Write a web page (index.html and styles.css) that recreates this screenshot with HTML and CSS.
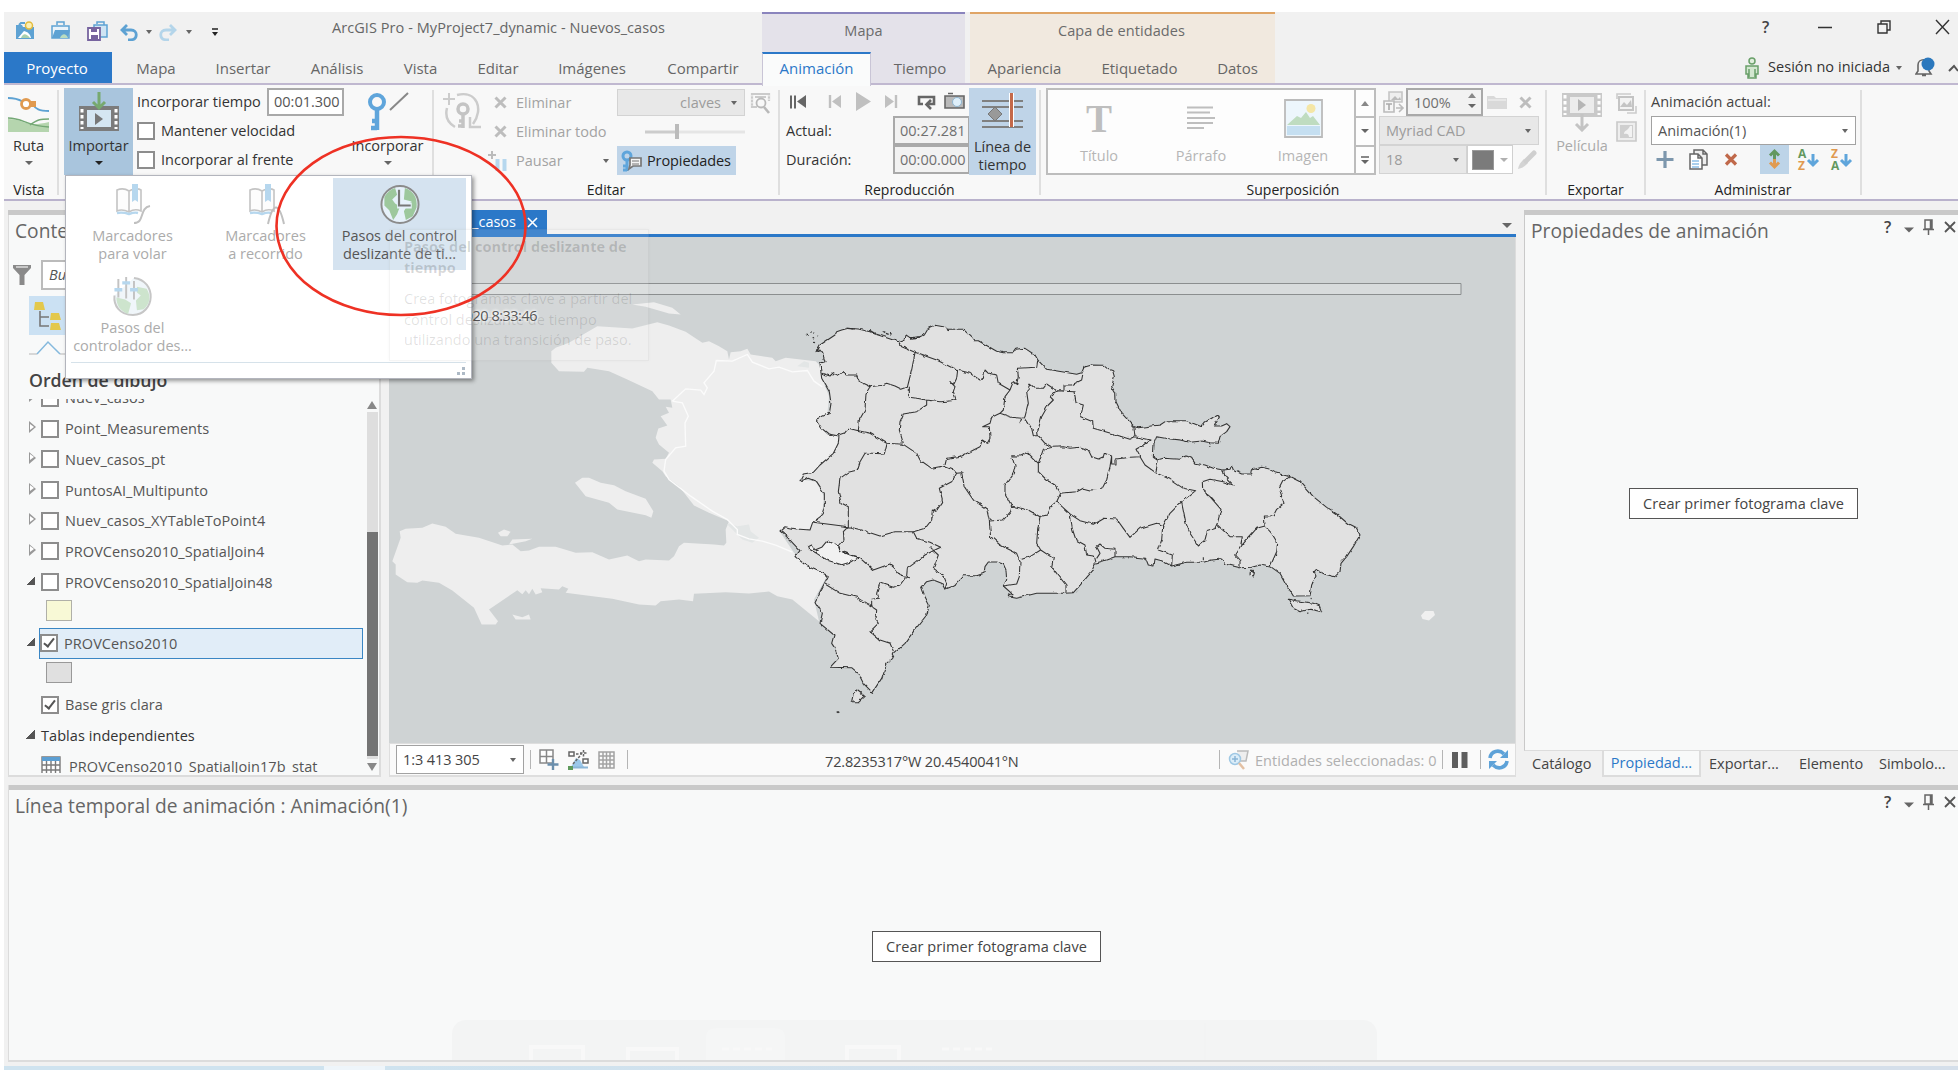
FILE: index.html
```html
<!DOCTYPE html>
<html lang="es">
<head>
<meta charset="utf-8">
<title>ArcGIS Pro - MyProject7_dynamic - Nuevos_casos</title>
<link rel="stylesheet" href="styles.css">
</head>
<body>
<div class="app">
  <header class="titlebar">
    <div class="quick">
      <svg width="20" height="20" viewBox="0 0 20 20"><path d="M1 4h6l1 2h11v12H1z" fill="#5ea2d3"/><path d="M4 4l2-2h4" stroke="#5ea2d3" fill="none" stroke-width="2"/><path d="M3 17l6-7c4 1 6 3 7 7z" fill="#fff"/><path d="M6 17c2-5 5-5 9 0z" fill="#a9d0ae"/><circle cx="14" cy="4.500" r="3.500" fill="#fbf0b4" stroke="#e3bb3d" stroke-width="1.500"/></svg>
      <svg width="20" height="20" viewBox="0 0 20 20"><path d="M1 5h17v12H1z" fill="#eaf3fa" stroke="#5ea2d3" stroke-width="1.500"/><path d="M6 4V1h7v3" fill="none" stroke="#5ea2d3" stroke-width="1.500"/><path d="M1 17l3-8h15l-2 8z" fill="#5ea2d3"/><path d="M9 17c2-5 6-5 8 0z" fill="#b9dcc0"/></svg>
      <svg width="21" height="20" viewBox="0 0 21 20"><path d="M7 4h13v12H7z" fill="#cfe4f3" stroke="#5ea2d3" stroke-width="1.500"/><path d="M10 3V1h7v3" fill="none" stroke="#5ea2d3" stroke-width="1.500"/><path d="M1 7h12v12H1z" fill="#fff" stroke="#77649f" stroke-width="1.800"/><path d="M4 7h6v4H4zM4 14h7v5H4z" fill="#77649f"/></svg>
      <svg class="undo" width="18" height="17" viewBox="0 0 18 17"><path d="M7 1L2 6l5 5M2 6h9c7 0 7 9 0 10H8" fill="none" stroke="#5ea2d3" stroke-width="2.800"/></svg>
      <i class="tri small"></i>
      <svg class="redo" width="18" height="17" viewBox="0 0 18 17"><path d="M11 1l5 5-5 5M16 6H7C0 6 0 15 7 16h3" fill="none" stroke="#b4d5ea" stroke-width="2.800"/></svg>
      <i class="tri small"></i>
      <span class="more"><i class="tri small"></i></span>
    </div>
    <div class="wintitle">ArcGIS Pro - MyProject7_dynamic - Nuevos_casos</div>
    <div class="ctx ctx-map">Mapa</div>
    <div class="ctx ctx-layer">Capa de entidades</div>
    <svg class="winbtns" width="200" height="30" viewBox="1758 12 200 30"><text x="1762" y="33" class="q">?</text><path d="M1818 27.500h14M1936 20l13 14M1949 20l-13 14" stroke="#333" stroke-width="1.400"/><path d="M1878 24h9v9h-9zM1881 24v-3h9v9h-3" fill="none" stroke="#333" stroke-width="1.400"/></svg>
  </header>
  <nav class="tabs">
    <span class="tab project">Proyecto</span>
    <span class="tab w88">Mapa</span>
    <span class="tab w86">Insertar</span>
    <span class="tab w102">Análisis</span>
    <span class="tab w65">Vista</span>
    <span class="tab w90">Editar</span>
    <span class="tab w98">Imágenes</span>
    <span class="tab w121 wide">Compartir</span>
    <span class="tab active">Animación</span>
    <span class="tab inmap">Tiempo</span>
    <span class="tab inlayer w109">Apariencia</span>
    <span class="tab inlayer w121">Etiquetado</span>
    <span class="tab inlayer w75">Datos</span>
    <span class="session">
      <svg width="14" height="22" viewBox="0 0 14 22"><circle cx="7" cy="4" r="3" fill="#e0eedd" stroke="#6aa06a" stroke-width="1.500"/><path d="M1 9h12v8h-2v4H3v-4H1zM4 12v8M10 12v8" fill="#d3e7d0" stroke="#6aa06a" stroke-width="1.500"/></svg>
      <b>Sesión no iniciada</b><i class="tri small"></i>
      <svg class="bell" width="20" height="21" viewBox="0 0 20 21"><path d="M1 17h15l-2-3V8c0-7-11-7-11 0v6zM7 18.500h4" fill="#f3f3f3" stroke="#666" stroke-width="1.600"/><circle cx="13" cy="7" r="6.500" fill="#2b78bd"/></svg>
      <svg class="collapse" width="10" height="8" viewBox="0 0 10 8"><path d="M1 7l5-5 4 5" fill="none" stroke="#555" stroke-width="2"/></svg>
    </span>
  </nav>

  <section class="ribbon">
    <div class="group g1">
      <div class="body big">
        <svg width="41" height="40" viewBox="0 0 41 40"><path d="M0 6c12 0 14 4 18 5M24 12c4 5 7 7 17 7" fill="none" stroke="#5ea2d3" stroke-width="1.800"/><path d="M0 27c16 0 17 9 41 3v10H0z" fill="#b5d5ae"/><path d="M0 26c16 0 17 8 41 9M22 33c8-6 11-6 19-6" fill="none" stroke="#74a875" stroke-width="1.500"/><circle cx="18" cy="12" r="4.500" fill="#fff" stroke="#e09a50" stroke-width="2.800"/><path d="M22 9h6v6h-6z" fill="#e09a50"/></svg>
        <span>Ruta</span><i class="tri"></i>
      </div>
      <div class="glabel">Vista</div>
    </div>
    <div class="sep"></div>
    <div class="group g2">
      <div class="body row">
        <div class="big import">
          <svg width="40" height="40" viewBox="0 0 40 40"><path d="M0 14h40v25H0z" fill="#7c7c7c"/><path d="M8 18h24v17H8z" fill="#d5e6f2"/><path d="M3 17v20M37 17v20" stroke="#fff" stroke-width="3" stroke-dasharray="3.500 2.500"/><path d="M16 21l8 6-8 6z" fill="#777"/><path d="M20 0v16M14 10l6 6 6-6" fill="none" stroke="#77a96f" stroke-width="3"/></svg>
          <span>Importar</span><i class="tri dark"></i>
        </div>
        <div class="opts">
          <div class="line"><span class="lbl w130">Incorporar tiempo</span><span class="input w77">00:01.300</span></div>
          <div class="line"><i class="check"></i><span>Mantener velocidad</span></div>
          <div class="line"><i class="check"></i><span>Incorporar al frente</span></div>
        </div>
        <div class="big addkey">
          <svg width="42" height="40" viewBox="0 0 42 40"><circle cx="10" cy="10" r="7" fill="none" stroke="#5fa5db" stroke-width="4"/><path d="M10 17v21M10 36H4M10 29H5" stroke="#5fa5db" stroke-width="4.500"/><path d="M23 18L41 1" stroke="#888" stroke-width="2"/></svg>
          <span>Incorporar</span><i class="tri"></i>
        </div>
      </div>
    </div>
    <div class="sep"></div>
    <div class="group g3">
      <div class="body row">
        <svg class="updkey" width="40" height="40" viewBox="0 0 40 40"><path d="M6 1v12M0 7h12" stroke="#ccc" stroke-width="2"/><path d="M14 3c20-5 27 14 16 29M4 16c-2 8 1 15 8 19M27 25v10h11" fill="none" stroke="#ccc" stroke-width="2.500"/><circle cx="20" cy="17" r="5" fill="none" stroke="#c4c4c4" stroke-width="3.500"/><path d="M20 22v14M20 34h-5M20 29h-4" stroke="#c4c4c4" stroke-width="3.500"/></svg>
        <div class="cmds">
          <div class="line"><svg width="13" height="13" viewBox="0 0 13 13"><path d="M1.500 1.500l10 10M11.500 1.500l-10 10" stroke="#bdbdbd" stroke-width="3"/></svg><span>Eliminar</span></div>
          <div class="line"><svg width="13" height="13" viewBox="0 0 13 13"><path d="M1.500 1.500l10 10M11.500 1.500l-10 10" stroke="#bdbdbd" stroke-width="3"/></svg><span>Eliminar todo</span></div>
          <div class="line pause"><svg width="19" height="20" viewBox="0 0 19 20"><path d="M4 0v8M0 4h8" stroke="#bbb" stroke-width="2"/><path d="M9.500 8v12M16.500 8v12" stroke="#b6d7ee" stroke-width="4"/></svg><span>Pausar</span><i class="tri small"></i></div>
        </div>
        <div class="keyopts">
          <div class="line"><span class="combo off w128">claves<i class="tri small"></i></span><svg width="21" height="22" viewBox="0 0 21 22"><path d="M1 2h19M2 1v14h5M19 1v8M5 5h11" fill="none" stroke="#cbcbcb" stroke-width="2.200"/><path d="M2 3v11M19 3v6" stroke="#fff" stroke-dasharray="1.500 2"/><circle cx="11" cy="11" r="4.500" fill="#f8f8f8" stroke="#b9b9b9" stroke-width="1.800"/><path d="M14 15l5 6" stroke="#b9b9b9" stroke-width="2.600"/></svg></div>
          <div class="line"><svg class="slide" width="100" height="16"><path d="M0 8h30" stroke="#ccc" stroke-width="3"/><path d="M34 8h66" stroke="#e5e5e5" stroke-width="3"/><path d="M32 0v15" stroke="#bbb" stroke-width="4"/></svg></div>
          <div class="line"><span class="pressed w119"><svg width="21" height="22" viewBox="0 0 21 22"><circle cx="6" cy="6" r="4" fill="none" stroke="#5fa5db" stroke-width="3"/><path d="M6 10v11M6 20H2M6 16H2" stroke="#5fa5db" stroke-width="3"/><path d="M9 8h11v8h-8l-4 3 1-4z" fill="#f3f3f3" stroke="#777" stroke-width="1.700"/><path d="M11 11h7M11 14h7" stroke="#777"/></svg>Propiedades</span></div>
        </div>
      </div>
      <div class="glabel">Editar</div>
    </div>
    <div class="sep"></div>
    <div class="group g4">
      <div class="body row">
        <div class="play">
          <svg width="184" height="28" viewBox="787 88 184 28"><path d="M792 95.500v13M796 95.500v13" stroke="#666" stroke-width="2"/><path d="M807 95v13l-9-6.500z" fill="#666"/><path d="M831 95v13" stroke="#c0c0c0" stroke-width="2.400"/><path d="M842 95v13l-9-6.500zM886 95v13l9-6.500zM857 92v19l15-9.500z" fill="#c0c0c0"/><path d="M897 95v13" stroke="#c0c0c0" stroke-width="2.400"/><path d="M924 104h-4v-7h15v7h-8M932 100l-4.500 4.500 4.500 4.500" fill="none" stroke="#666" stroke-width="2.600"/><path d="M946 96h19v12h-19zM949 93.500h5" fill="#b9b9b9" stroke="#666" stroke-width="1.600"/><circle cx="958" cy="102" r="4.500" fill="#deeffa" stroke="#8fb6d0"/></svg>
          <div class="line"><span class="lbl w107">Actual:</span><span class="input off w77">00:27.281</span></div>
          <div class="line"><span class="lbl w107">Duración:</span><span class="input off w77">00:00.000</span></div>
        </div>
        <div class="big timeline">
          <svg width="42" height="35" viewBox="0 0 42 35"><path d="M0 8h41M0 14h41M0 28h41M0 34h41" stroke="#808080" stroke-width="1.800"/><path d="M13 14l7 7-7 7-7-7z" fill="#999" stroke="#777"/><path d="M29.500 0v34" stroke="#fff" stroke-width="5"/><path d="M29.500 0v34" stroke="#c4694a" stroke-width="3"/></svg>
          <span>Línea de<br>tiempo</span>
        </div>
      </div>
      <div class="glabel">Reproducción</div>
    </div>
    <div class="sep"></div>
    <div class="group g5">
      <div class="body row">
        <div class="gallery">
          <div class="gitem"><em class="bigt">T</em><span>Título</span></div>
          <div class="gitem"><svg width="28" height="39" viewBox="0 0 28 39"><path d="M0 8.500h26M0 13.500h23M0 19h28M0 24h26M0 29h17" stroke="#bebebe" stroke-width="1.800"/></svg><span>Párrafo</span></div>
          <div class="gitem"><svg width="39" height="39" viewBox="0 0 39 39"><path d="M1 1h37v37H1z" fill="#edf6fc" stroke="#bbb" stroke-width="1.800"/><path d="M3 27h33v9H3z" fill="#c5dff1"/><path d="M3 26l10-9 4 2 5-6 4 6 3-2 7 9z" fill="#bfdcc0"/><circle cx="27" cy="9.500" r="4.500" fill="#f4e6a6"/></svg><span>Imagen</span></div>
          <div class="gscroll"><span><i class="tri up"></i></span><span><i class="tri"></i></span><span class="exp"><i class="tri"></i></span></div>
        </div>
        <div class="textopts">
          <div class="line">
            <svg class="swap" width="27" height="22" viewBox="0 0 27 22"><path d="M10 1h13v10H10z" fill="#eee" stroke="#c5c5c5" stroke-width="1.600"/><path d="M12 9l4-4 3 3 2-2 1 3z" fill="#bbb"/><path d="M5 10h10v11H5zM17 17h6M20 13l4 4-4 4" fill="#f6f6f6" stroke="#bbb" stroke-width="1.600"/><path d="M7 13h6M10 13v6" stroke="#aaa" stroke-width="1.600"/></svg>
            <span class="input off spin w77">100%<span><i class="tri up"></i><i class="tri"></i></span></span>
            <svg width="20" height="15" viewBox="0 0 20 15"><path d="M0 14V1h7l2 2h11v11z" fill="#d9d9d9"/><path d="M1 5h18" stroke="#f5f5f5"/></svg>
            <svg class="ex" width="13" height="13" viewBox="0 0 13 13"><path d="M1.500 1.500l10 10M11.500 1.500l-10 10" stroke="#bdbdbd" stroke-width="3"/></svg>
          </div>
          <div class="line"><span class="combo off left w160">Myriad CAD<i class="tri small"></i></span></div>
          <div class="line"><span class="combo off left w88">18<i class="tri small"></i></span><span class="color"><b></b><i class="tri"></i></span><svg class="brush" width="20" height="20" viewBox="0 0 20 20"><path d="M1 19c1-5 3-7 6-10l4 4c-3 3-5 5-10 6z" fill="#d4d4d4"/><path d="M9 11l8-8" stroke="#cfcfcf" stroke-width="5" stroke-linecap="round"/></svg></div>
        </div>
      </div>
      <div class="glabel">Superposición</div>
    </div>
    <div class="sep"></div>
    <div class="group g6">
      <div class="body row">
        <div class="big movie">
          <svg width="40" height="40" viewBox="0 0 40 40"><path d="M0 1h40v24H0z" fill="#c9c9c9"/><path d="M8 5h24v16H8z" fill="#ececec"/><path d="M3 3v20M37 3v20" stroke="#fff" stroke-width="3" stroke-dasharray="3.500 2.500"/><path d="M16 7l8 6-8 6z" fill="#b5b5b5"/><path d="M20 22v16M14 32l6 6 6-6" fill="none" stroke="#c4c4c4" stroke-width="3"/></svg>
          <span>Película</span>
        </div>
        <div class="minis">
          <svg width="21" height="21" viewBox="0 0 21 21"><path d="M1 6V1h14M20 13v7H11" fill="none" stroke="#ccc" stroke-width="1.600"/><path d="M3 4h14v13H3z" fill="#f3f3f3" stroke="#c4c4c4" stroke-width="2"/><path d="M4 14l4-5 3 3 4-5 1 7z" fill="#c4c4c4"/></svg>
          <svg width="21" height="21" viewBox="0 0 21 21"><path d="M1 1h19v19H1z" fill="#eee" stroke="#c9c9c9" stroke-width="1.600"/><path d="M4 4h13v13H4z" fill="#cfcfcf"/><path d="M14 5c-2 5-6 4-6 8 3-1 5 0 5 3h3V5z" fill="#f3f3f3"/></svg>
        </div>
      </div>
      <div class="glabel">Exportar</div>
    </div>
    <div class="sep"></div>
    <div class="group g7">
      <div class="body">
        <div class="line">Animación actual:</div>
        <div class="line"><span class="combo left w205">Animación(1)<i class="tri small"></i></span></div>
        <div class="line"><svg width="205" height="29" viewBox="1651 146 205 29"><path d="M1665 152v17M1656.500 160.500h17" stroke="#7d97ad" stroke-width="3.200"/><path d="M1694 151h9l4 4v11h-13zM1703 151v4h4" fill="#eee" stroke="#666" stroke-width="1.500"/><path d="M1690 155h8l4 4v11h-12zM1698 155v4h4" fill="#fff" stroke="#666" stroke-width="1.500"/><path d="M1692 162h7M1692 165h7M1692 168h7" stroke="#8fc0e6" stroke-width="1.600"/><path d="M1726 155.500l10 10M1736 155.500l-10 10" stroke="#c0694b" stroke-width="3.200"/><path d="M1760 146h29v29h-29z" fill="#bdd4e8"/><path d="M1774.500 152v8M1770 156.500l4.500-4.500 4.500 4.500" fill="none" stroke="#63985f" stroke-width="3"/><path d="M1774.500 160v8M1770 163.500l4.500 4.500 4.500-4.500" fill="none" stroke="#e09a50" stroke-width="3"/><path d="M1813 155v10M1808 161l5 5 5-5M1846 155v10M1841 161l5 5 5-5" fill="none" stroke="#5fa5db" stroke-width="3"/><text x="1798" y="159" class="az gr">A</text><text x="1798" y="171" class="az or">Z</text><text x="1831" y="159" class="az or">Z</text><text x="1831" y="171" class="az gr">A</text></svg></div>
      </div>
      <div class="glabel">Administrar</div>
    </div>
    <div class="sep"></div>
  </section>

  <main class="work">
    <aside class="panel contents">
      <h2>Contenido</h2>
      <div class="search"><svg width="18" height="22" viewBox="0 0 18 22"><path d="M0 1h18v3l-6.500 7v10h-5V11L0 4z" fill="#8a8a8a"/><path d="M3 3h12" stroke="#ddd" stroke-width="1.500"/></svg><span>Buscar</span></div>
      <div class="views">
        <svg width="40" height="39" viewBox="0 0 40 39"><path d="M0 0h40v39H0z" fill="#cbe1f3"/><path d="M6 6h8l2 8H5zM22 17h8l2 7H21zM22 27h8l2 7H21z" fill="#e3c84c"/><path d="M11 15v15h9M11 21h9" fill="none" stroke="#777" stroke-width="1.600"/></svg>
        <svg width="66" height="22" viewBox="0 0 66 22"><path d="M0 19h8M31 19h35" stroke="#ccc" stroke-width="1.500"/><path d="M8 19L19 7l12 12" fill="none" stroke="#85b9dd" stroke-width="1.500"/></svg>
      </div>
      <h3>Orden de dibujo</h3>
      <div class="tree">
        <ul>
          <li><i class="exp"></i><i class="check"></i>Nuev_casos</li>
          <li><i class="exp"></i><i class="check"></i>Point_Measurements</li>
          <li><i class="exp"></i><i class="check"></i>Nuev_casos_pt</li>
          <li><i class="exp"></i><i class="check"></i>PuntosAI_Multipunto</li>
          <li><i class="exp"></i><i class="check"></i>Nuev_casos_XYTableToPoint4</li>
          <li><i class="exp"></i><i class="check"></i>PROVCenso2010_SpatialJoin4</li>
          <li><i class="exp open"></i><i class="check"></i>PROVCenso2010_SpatialJoin48</li>
          <li class="sw"><b class="yellow"></b></li>
          <li><i class="exp open"></i><span class="selected"><i class="check on"></i>PROVCenso2010</span></li>
          <li class="sw"><b class="grey"></b></li>
          <li><i class="exp none"></i><i class="check on"></i>Base gris clara</li>
          <li class="head"><i class="exp open"></i>Tablas independientes</li>
          <li class="tbl"><i class="exp none"></i><svg width="20" height="20" viewBox="0 0 20 20"><path d="M1 1h18v18H1zM1 9h18M1 14h18M5.500 5v14M10 5v14M14.500 5v14" fill="#fff" stroke="#7a7a7a" stroke-width="1.400"/><path d="M1 1h18v4H1z" fill="#5c9fd3"/></svg>PROVCenso2010_SpatialJoin17b_stat</li>
        </ul>
        <div class="scroll"><i class="tri up"></i><div class="track"><div class="thumb"></div></div><i class="tri"></i></div>
      </div>
    </aside>

    <section class="mapview">
      <div class="maptabs"><span class="maptab">Nuevos_casos<svg width="11" height="11" viewBox="0 0 11 11"><path d="M1 1l9 9M10 1l-9 9" stroke="#fff" stroke-width="1.600"/></svg></span><i class="tri"></i></div>
      <div class="map">
        <svg width="1126" height="506" viewBox="389 237 1126 506">
          <defs><filter id="coast" x="-2%" y="-2%" width="104%" height="104%" color-interpolation-filters="sRGB"><feTurbulence type="fractalNoise" baseFrequency="0.16" numOctaves="2" seed="4" result="noise"/><feDisplacementMap in="SourceGraphic" in2="noise" scale="3.500" xChannelSelector="R" yChannelSelector="G"/></filter></defs>
          <g transform="translate(379 299.500) scale(.33333)" fill="#eeeeee">
            <path d="M517 155L530 145 570 130 655 80 760 87 835 68 870 78 920 97 970 130 990 125 1020 140 1045 155 1050 180 1055 158 1085 155 1105 148 1115 165 1180 175 1190 185 1220 175 1310 185 1325 200 1330 240 1350 290 1345 345 1310 360 1345 405 1380 410 1370 460 1300 520 1260 540 1310 545 1335 590 1330 640 1295 690 1200 692 1245 760 1345 828 1305 900 1320 965 1240 900 1195 890 1170 876 1110 882 1040 878 945 883 942 905 900 900 845 905 830 918 780 915 700 898 600 885 560 880 568 868 550 860 540 870 485 866 490 878 470 885 460 868 450 884 440 872 430 884 415 872 330 930 357 965 350 975 308 975 285 925 220 873 180 850 130 843 115 850 85 848 50 825 50 795 40 785 65 715 62 695 80 688 130 685 160 672 200 682 230 703 300 715 370 738 400 735 425 755 450 753 480 742 530 742 590 760 640 758 690 780 745 768 780 785 800 780 870 783 885 770 900 740 915 730 1005 735 1035 738 1042 730 1040 690 1050 665 990 640 945 618 900 560 860 530 850 515 820 490 825 480 860 478 870 460 840 435 830 415 838 387 865 378 845 350 870 340 860 322 880 325 875 300 840 300 820 275 745 240 690 215 625 205 615 217 540 215 517 190Z"/>
            <path d="M588 550L610 535 630 535 665 550 705 557 740 575 800 598 823 635 817 655 800 647 715 630 690 610 620 590ZM357 700L375 690 395 697 385 710 365 710ZM390 735L400 720 460 718 440 725ZM400 945L430 953 450 945 455 960 410 960ZM760 15L825 8 880 25 905 45 870 42 800 22Z"/>
            <path d="M1050 672l25 8 35-5 5 20 25 20-20 15-30-10-45-45zM1255 200l20-15 15 5v15z" fill="#e3e6e6"/>
            <path d="M880 305L920 268 965 272 975 285 985 265 975 250 1005 215 1012 183 1060 185 1105 165 1120 188 1170 208 1200 203 1240 217 1285 213 1305 245 1330 262M880 305L910 310 928 350 918 370 920 440 890 445 860 480 855 515 870 540 935 590 1000 635 1045 660 1075 690 1075 705 1110 718 1150 725 1190 737 1240 758" fill="none" stroke="#fbfbfb" stroke-width="4"/>
          </g>
          <g class="prov" filter="url(#coast)"><g transform="translate(770 310) scale(.33333)">
            <path class="land" d="M150 105L195 75 200 65 215 60 235 55 265 57 300 65 315 72 345 82 385 95 405 88 408 75 420 83 450 80 465 72 475 55 495 46 520 50 530 58 580 58 605 82 612 92 625 92 680 124 700 128 730 128 737 118 765 115 795 135 805 152 830 178 880 186 920 193 935 188 942 172 965 165 1000 166 1015 178 1028 182 1033 200 1025 230 1037 250 1038 275 1055 310 1093 350 1105 353 1170 345 1190 332 1250 332 1295 350 1305 337 1340 316 1348 322 1333 348 1355 348 1370 341 1380 350 1370 365 1350 380 1345 400 1320 398 1295 393 1260 397 1230 390 1185 385 1160 380 1152 400 1150 442 1162 450 1180 445 1230 448 1250 438 1265 445 1275 460 1305 465 1330 475 1360 480 1380 478 1385 466 1390 480 1415 492 1445 492 1447 480 1475 472 1495 476 1515 488 1560 500 1590 515 1630 560 1670 592 1700 612 1735 642 1760 655 1770 675 1750 710 1730 740 1713 760 1710 785 1695 800 1665 793 1640 780 1633 788 1638 798 1625 825 1620 857 1570 858 1550 825 1530 790 1505 772 1470 765 1445 772 1410 773 1365 762 1355 747 1325 750 1300 757 1250 757 1205 768 1175 752 1155 747 1152 768 1135 765 1127 745 1080 740 1035 740 1000 753 975 760 965 785 935 820 910 848 885 850 860 850 800 850 740 865 715 860 725 850 700 828 710 810 708 780 700 762 680 756 655 756 645 770 642 790 620 797 580 797 550 828 525 838 515 820 490 810 470 815 455 832 465 860 478 885 470 915 430 965 405 1000 372 1030 365 1045 350 1060 335 1105 307 1147 280 1120 265 1090 245 1073 180 1072 205 1045 195 1015 185 1000 192 975 150 940 157 910 135 875 175 797 110 768 75 740 90 722 50 680 30 663 45 650 80 657 120 660 128 637 155 617 163 590 163 550 140 515 115 505 90 512 100 492 130 487 150 465 190 430 205 400 207 378 175 372 155 355 138 328 178 310 183 280 178 245 155 205 150 160 165 155 158 130 150 120 138 128Z"/>
            <path class="lake" d="M115 710L125 705 135 720 155 712 172 692 205 708 210 722 265 742 240 757 215 764 170 750 140 730 118 718Z"/>
            <path class="edge" d="M155 190L180 198 190 188 205 197 220 185 232 195 260 195 268 215 300 230 335 226 350 220 375 228 395 238 412 232 425 180 435 128M385 95L395 110 435 127 500 150 560 180 600 190 630 210 640 205 645 180 655 190 680 195 685 220 720 240M418 230L418 262 440 265 470 270 470 285 440 305 400 312 390 335 388 360 400 400M470 270L510 275 545 272 558 268 550 245 555 230 540 215 552 222 560 205 563 180M300 230L288 250 285 300 268 330 265 360M205 375L225 368 235 355 265 362 300 370 350 400 400 403 440 430 450 450 485 475 520 468 550 480 560 490M350 403L343 432 310 430 285 430 270 455 262 480 235 487 210 505 205 545 213 578 235 590 235 650M130 637L235 650 275 660 330 678 375 665 430 665 465 655 485 630 487 600 497 605 518 575 508 535 545 515 560 490 575 488 583 530 610 570 650 597 658 633M525 465L530 445 575 438 630 410 637 390 652 400 660 385 658 350 638 350 660 340 665 322 690 310M720 240L705 260 700 300 690 310 725 322 755 325 750 338 765 320 775 280 770 245 780 222 795 235 820 235 830 222 860 242 882 242M720 240L730 215 740 222 745 200 742 175 800 172 803 152M765 325L785 355 790 377 805 377 803 365 815 320 835 285 850 270 840 260 860 242 912 245 918 278 940 285 932 320 968 335 970 355 1030 372 1080 388 1095 380 1092 353M882 240L882 225 905 225 935 210 940 185M805 377L825 400 848 412 820 418 805 460 805 485 830 510 855 525 872 550 860 575 840 590 830 615 810 620 775 600 725 588 705 550 705 525 730 490 735 470 725 437 750 438 772 427 805 460M848 412L880 410 900 415 930 412 955 420 965 440 985 447 1000 440 1003 430 1025 438 1020 470 1010 510 995 538 960 540 940 535 920 545 870 550M1025 440L1025 462 1038 462 1038 447 1080 442 1110 440 1098 418 1120 405 1140 390 1095 380M725 588L722 605 700 630 658 633 662 680 690 705 740 730 750 755 748 800 740 822 700 828M810 620L803 660 800 700 812 720 780 740 755 748M812 720L850 745 845 770 860 790 888 825 888 848M860 575L900 612 930 632 970 643 1000 625 1040 627 1060 655 1080 682 1110 655 1160 640 1178 650M900 612L908 660 918 690 945 705 950 735 970 738 975 758M980 745L990 730 980 710 990 702 1005 715 1035 718 1035 740M235 650L220 665 222 690 207 708 210 722 240 735 265 740 310 780 360 762 380 780 395 800 420 803M430 665L440 685 480 697 512 712 490 722 465 735 440 755 412 775 410 798 390 825 370 832 330 818 320 850 325 865 305 868 305 890M165 822L210 850 260 862 305 890 320 900 318 930 325 940 300 965 330 990 360 1000 372 1028M490 722L505 735 490 775 520 795 530 820 525 838M482 712L495 726"/>
            <path class="edge" transform="translate(930)" d="M180 440L195 465 227 488 270 508 310 535 347 542 305 575 270 610 248 650 245 690 235 720 277 735 275 768M227 488L235 450M430 480L435 500 460 525 430 515 390 508 367 515 368 542 390 560 423 598 412 640 405 655 382 662 375 690 355 708 330 670 318 640 305 575M412 645L450 680 487 680 482 710 467 735 480 750 480 772M482 710L530 655 555 648 575 670 593 700 590 725 570 770M630 500L608 515 598 535 612 580 590 598 580 617 553 618 555 648M370 757L370 742"/>
            <path class="land" d="M1442 780L1453 790 1450 798 1440 795ZM1555 868L1580 872 1630 880 1648 887 1655 905 1620 898 1590 905 1570 895ZM260 1140L283 1158 265 1175 245 1175 250 1150Z"/>
            <path class="edge cays" d="M110 75l6 3M122 64l2 4M130 68l2 2M128 82l4 2M132 97l3 1M142 77l2 1M338 65l6 3M348 70l8 3M360 71l5 1M232 55l22 2M300 62l14 8M420 84l30-3M527 58l8 5M200 1205l5 3M1622 865l3 1M1612 912l3 1M1318 407l3 0M140 125l8-14M714 852l16 6"/>
          </g></g>
          <path d="M1421 615.500L1425 611 1433.500 611 1435 615 1429 620.500 1422.500 619Z" fill="#f0f0f0"/>
          <path d="M380 283.500h1081v11H380" fill="#ffffff30" stroke="#8b8e8f"/>
        </svg>
        <span class="stamp">03/02/2020 8:33:46</span>
      </div>
      <div class="status">
        <span class="combo left scale">1:3 413 305<i class="tri small"></i></span>
        <i class="bar"></i>
        <svg width="20" height="22" viewBox="0 0 20 22"><path d="M1 1h13v13H1zM7.500 1v13M1 7.500h13" fill="#fff" stroke="#888" stroke-width="1.500"/><path d="M14 10v11M8.500 15.500h11" stroke="#6b8fad" stroke-width="2.400"/></svg>
        <svg width="21" height="21" viewBox="0 0 21 21"><path d="M3 18L8 9l4 2 4 7z" fill="#9cc8ea"/><path d="M1 3h5v4H1zM15 10h5v4h-5z" fill="#fff" stroke="#666" stroke-width="1.500"/><path d="M8 5h6M15.500 1v7M12 4h7M5 15l7-8" stroke="#666" stroke-dasharray="2.500 1.500" stroke-width="1.500"/><path d="M0 17h5v4H0z" fill="#5f9a5c"/><path d="M5 18.500h15" stroke="#8ab6d8" stroke-width="2"/></svg>
        <svg width="17" height="18" viewBox="0 0 17 18"><path d="M1 1h15v16H1zM1 5h15M1 9h15M1 13h15M5 1v16M8.500 1v16M12 1v16" fill="none" stroke="#a3a3a3" stroke-width="1.500"/></svg>
        <i class="bar"></i>
        <span class="coords">72.8235317°W 20.4540041°N</span>
        <i class="bar"></i>
        <svg width="21" height="20" viewBox="0 0 21 20"><path d="M9 1h11l-2 10h-7" fill="#eee" stroke="#bbb" stroke-width="1.500"/><circle cx="7" cy="9" r="5.500" fill="#dcedf8" stroke="#9fc8e4" stroke-width="1.500"/><path d="M7 6v6M4 9h6" stroke="#89b5d6" stroke-width="1.500"/><path d="M11 13l5 6" stroke="#e3c0a3" stroke-width="2.500"/></svg>
        <span class="sel">Entidades seleccionadas: 0</span>
        <i class="bar"></i>
        <svg width="18" height="18"><path d="M4 1v16M13.500 1v16" stroke="#5e5e5e" stroke-width="6"/></svg>
        <i class="bar b2"></i>
        <svg class="refresh" width="21" height="21" viewBox="0 0 21 21"><path d="M2 9C3 2 11 0 16 5M19 12c-1 7-9 9-14 4" fill="none" stroke="#5ea2d8" stroke-width="3.600"/><path d="M20 1v8h-8zM1 20v-8h8z" fill="#5ea2d8"/></svg>
      </div>
    </section>

    <aside class="right">
      <div class="panel props">
        <div class="phead"><h2>Propiedades de animación</h2><svg width="76" height="20" viewBox="1882 217 76 20"><use href="#pcmd"/></svg></div>
        <div class="button">Crear primer fotograma clave</div>
      </div>
      <div class="ptabs"><span class="p1">Catálogo</span><span class="p2">Propiedad...</span><span class="p3">Exportar...</span><span class="p4">Elemento</span><span>Simbolo...</span></div>
    </aside>

    <section class="panel timelinepanel">
      <div class="phead"><h2>Línea temporal de animación : Animación(1)</h2><svg width="76" height="20" viewBox="1882 217 76 20"><defs><g id="pcmd"><text x="1884" y="233" class="q">?</text><path d="M1904 227.500h10l-5 5z" fill="#666"/><path d="M1925 220h7v9h-7zM1923 229.500h11M1928.500 230v5M1930.500 220v9" fill="none" stroke="#666" stroke-width="1.500"/><path d="M1945 222l10 10M1955 222l-10 10" stroke="#555" stroke-width="1.800"/></g></defs><use href="#pcmd"/></svg></div>
      <div class="button">Crear primer fotograma clave</div>
      <div class="ghostbar"><svg width="925" height="42" viewBox="0 0 925 42"><path d="M254 42V18q0-10 10-10h59q10 0 10 10v24z" fill="#f5f6f6"/><path d="M79 42V27h52v15M176 42V29h49v13M395 42V27h52v15" fill="none" stroke="#f8f8f8" stroke-width="4"/><path d="M270 29h50M490 29h50" stroke="#f8f8f8" stroke-width="3" stroke-dasharray="7 4"/><path d="M753 3v39" stroke="#f1f2f2"/></svg></div>
    </section>
  </main>
  <footer class="taskbar"></footer>

  <div class="menu">
    <div class="mgrid">
      <div class="mitem"><svg width="40" height="41" viewBox="0 0 40 41"><path d="M4 6c5-2 9-1 12 1 3-2 9-3 12-1v21c-4-2-9-1-12 1-4-2-8-3-12-1zM16 7v20" fill="#fdfdfd" stroke="#c4c4c4" stroke-width="1.600"/><path d="M4 29c6-1 9 0 12 1 3-1 6-2 9-1" fill="none" stroke="#b6d7ee" stroke-width="2.400"/><path d="M19 0h6v18l-3-2-3 2z" fill="#b6d7ee"/><path d="M37 22c-11 2-5 17-16 17" fill="none" stroke="#c0c0c0" stroke-width="2"/></svg><span>Marcadores<br>para volar</span></div>
      <div class="mitem"><svg width="40" height="41" viewBox="0 0 40 41"><path d="M4 6c5-2 9-1 12 1 3-2 9-3 12-1v21c-4-2-9-1-12 1-4-2-8-3-12-1zM16 7v20" fill="#fdfdfd" stroke="#c4c4c4" stroke-width="1.600"/><path d="M4 29c6-1 9 0 12 1 3-1 6-2 9-1" fill="none" stroke="#b6d7ee" stroke-width="2.400"/><path d="M19 0h6v18l-3-2-3 2z" fill="#b6d7ee"/><path d="M22 40c5-22 11-22 16 0" fill="none" stroke="#c0c0c0" stroke-width="2"/></svg><span>Marcadores<br>a recorrido</span></div>
      <div class="mitem hot"><svg width="42" height="42" viewBox="0 0 42 42"><circle cx="21" cy="21" r="19" fill="#e6f1fa" stroke="#8b8b8b" stroke-width="2"/><path d="M5 13C8 8 12 5 16 4l2 7-5 5 3 4 5 3-3 8-4 6-4-10-5-5zM26 4c9 3 13 10 12 20l-4 9-7 4-2-9 4-7 4-3-8-2z" fill="#9dc89d"/><path d="M21 5v17h12" fill="none" stroke="#e6f1fa" stroke-width="6"/><path d="M20 6v16h12" fill="none" stroke="#777" stroke-width="2.200"/></svg><span>Pasos del control<br>deslizante de ti...</span></div>
      <div class="mitem"><svg width="42" height="42" viewBox="0 0 42 42"><path d="M22 2c24 3 22 37-1 38C7 40 1 30 2 20" fill="#f0f6fa" stroke="#c6c6c6" stroke-width="2"/><path d="M4 22l9 2 6 4-3 11C8 36 4 30 4 22zM25 11l10 2c5 8 3 16-3 21l-7 1-1-10 5-5-4-3z" fill="#cde4cd"/><path d="M6 3v19M14 1v22M22 5v19" stroke="#c3c3c3" stroke-width="2"/><path d="M2 14h8M10 7h8M18 14h8" stroke="#b6d7ee" stroke-width="3.500"/></svg><span>Pasos del<br>controlador des...</span></div>
    </div>
    <div class="mfoot"><svg width="10" height="10"><path d="M6 0h3v3H6zM6 5h3v3H6zM1 5h3v3H1z" fill="#aebac6"/></svg></div>
  </div>
  <div class="tooltip"><b>Pasos del control deslizante de<br>tiempo</b><p>Crea fotogramas clave a partir del<br>control deslizante de tiempo<br>utilizando una transición de paso.</p></div>
  <svg class="mark" width="254" height="184" viewBox="0 0 254 184"><ellipse cx="127" cy="92" rx="124.500" ry="89" fill="none" stroke="#ee3124" stroke-width="2.600"/></svg>
</div>
</body>
</html>
```
FILE: styles.css
```css
* { box-sizing: border-box; }
body { margin: 0; background: #fff; font-family: "Open Sans", "Noto Sans", sans-serif; font-size: 14.5px; letter-spacing: 0; color: #333; width: 1958px; height: 1070px; overflow: hidden; }
h2, h3, p, ul { margin: 0; padding: 0; font-weight: 400; list-style: none; }
i, em { font-style: normal; }
svg { display: block; flex: none; }
.app { position: relative; margin-left: 4px; padding-top: 12px; height: 1070px; display: flex; flex-direction: column; }

.tri { display: inline-block; flex: none; border: 4px solid transparent; border-top: 4px solid #666; border-bottom: 0; width: 0; height: 0; }
.tri.small { border-width: 3px; border-top-width: 4px; border-bottom-width: 0; }
.tri.dark { border-top-color: #222; }
.tri.up { border-bottom: 5px solid #888; border-top: 0; }

.titlebar { height: 40px; background: #f1f1f1; display: flex; flex: none; }
.quick { width: 328px; display: flex; align-items: flex-start; padding: 9px 0 0 11px; gap: 16px; }
.quick .undo { margin: 3px -8px 0 -4px; }
.quick .redo { margin: 3px -7px 0 -9px; }
.quick .tri { margin-top: 9px; }
.quick .more { margin-left: 4px; margin-top: 7px; border-top: 2px solid #555; width: 6px; height: 10px; display: flex; }
.quick .more .tri { margin-top: 2px; border-top-color: #222; }
.wintitle { width: 430px; line-height: 32px; color: #666; white-space: nowrap; letter-spacing: .06px; }
.ctx { text-align: center; line-height: 33px; color: #6b6b6b; border-top: 2px solid; letter-spacing: .1px; }
.ctx-map { width: 203px; background: #e4e2ea; border-color: #8a84bd; margin-right: 5px; }
.ctx-layer { width: 305px; background: #f1e9df; border-color: #e0a566; padding-right: 2px; }
.winbtns { margin-left: auto; }
.q { font: 600 16px "Open Sans", sans-serif; fill: #444; }

.tabs { height: 31px; background: #f1f1f1; display: flex; flex: none; line-height: 32px; color: #666; }
.tab { text-align: center; flex: none; font-size: 15px; }
.tab.project { width: 108px; background: #2b78c8; color: #fff; padding-right: 2px; }
.tab.wide { padding-left: 3px; }
.w88 { width: 88px; } .w86 { width: 86px; } .w102 { width: 102px; } .w65 { width: 65px; } .w90 { width: 90px; } .w98 { width: 98px; } .w121 { width: 121px; } .w109 { width: 109px; } .w75 { width: 75px; }
.tab.active { width: 109px; background: #fafbfb; border: 1px solid #c9c5d6; border-top: 2px solid #2b78c8; border-bottom: 0; height: 34px; color: #2b78c8; line-height: 28px; z-index: 1; }
.tab.inmap { width: 94px; background: #e4e2ea; margin-right: 5px; padding-left: 4px; }
.tab.inlayer { background: #f1e9df; }
.session { margin-left: auto; width: 213px; display: flex; align-items: center; height: 31px; color: #333; white-space: nowrap; letter-spacing: .05px; }
.session b { font-weight: 400; margin: -2px 6px 0 9px; width: 122px; }
.session .bell { margin-left: 13px; }
.session .collapse { margin-left: auto; }

.ribbon { flex: none; height: 118px; background: #f8f8f8; border-top: 2px solid #c0b8d0; border-bottom: 2px solid #b9b2cc; display: flex; padding-top: 3px; color: #333; line-height: 20px; }
.sep { width: 2px; margin-top: 2px; height: 105px; background: #dfdfdf; flex: none; }
.group { flex: none; display: flex; flex-direction: column; }
.g1 { width: 53px; } .g2 { width: 373px; } .g3 { width: 344px; } .g4 { width: 259px; } .g5 { width: 504px; } .g6 { width: 97px; } .g7 { width: 214px; padding-left: 5px; }
.body { height: 87px; flex: none; }
.row { display: flex; }
.glabel { text-align: center; margin-top: 4px; line-height: 22px; font-size: 14px; color: #222; }
.g7 .glabel { margin-left: -5px; }
.big { display: flex; flex-direction: column; align-items: center; padding-top: 4px; }
.big > span { margin-top: 4px; }
.big .tri { margin-top: 5px; }
.g1 .big { margin-left: -4px; padding-top: 4px; }
.g1 .glabel { margin-left: -3px; }
.import { width: 69px; margin-left: 5px; background: #a9c5dd; }
.line { height: 29px; display: flex; align-items: center; white-space: nowrap; }
.opts { width: 210px; padding-left: 4px; flex: none; }
.opts .line:first-child { height: 28px; }
.w130 { width: 130px; flex: none; } .w77 { width: 77px; flex: none; } .w107 { width: 107px; }
.input { height: 28px; border: 2px solid #a9a9a9; background: #fff; color: #555; line-height: 24px; padding-left: 5px; }
.input.off { background: #f2f2f2; color: #707070; height: 29px; line-height: 25px; }
.check { display: inline-block; flex: none; width: 18px; height: 18px; border: 2px solid #8d8d8d; background: #fff; margin-right: 6px; position: relative; }
.check.on::after { content: ""; position: absolute; left: 4px; top: 0; width: 4px; height: 9px; border: solid #555; border-width: 0 2px 2px 0; transform: rotate(38deg); }
.addkey { width: 77px; margin-left: 6px; }
.addkey svg { margin-left: 0; }
.updkey { margin: 4px 0 0 9px; }
.cmds { width: 137px; padding-left: 11px; color: #a3a3a3; flex: none; }
.cmds .line { gap: 9px; }
.cmds .pause { margin-left: -6px; }
.cmds .pause .tri { margin-left: auto; margin-right: 11px; }
.combo { border: 1px solid #a2a2a2; background: #fff; height: 29px; line-height: 27px; display: flex; align-items: center; justify-content: flex-end; gap: 10px; padding-right: 7px; color: #555; }
.combo.left { justify-content: space-between; padding-left: 6px; }
.combo.off { background: #e8e8e8; color: #9c9c9c; border-color: #d3d3d3; }
.w128 { width: 128px; } .w119 { width: 119px; } .w160 { width: 160px; } .w205 { width: 205px; }
.combo.w88 { width: 88px; }
.keyopts { width: 155px; padding-left: 1px; }
.keyopts .combo { margin-left: -4px; height: 27px; }
.keyopts .line > svg:not(.slide) { margin-left: 5px; }
.slide { margin-left: 24px; }
.pressed { background: #bfd4e8; height: 29px; display: flex; align-items: center; gap: 5px; padding-left: 4px; color: #222; margin-left: -4px; letter-spacing: -.1px; }
.play { width: 190px; padding-left: 6px; flex: none; }
.timeline { width: 67px; background: #bfd4e8; padding-top: 5px; margin-left: -1px; }
.timeline span { margin-top: 10px; line-height: 17.500px; text-align: center; white-space: nowrap; }
.gallery { margin-left: 5px; width: 330px; height: 87px; border: 2px solid #bdbdbd; background: #fdfdfd; display: flex; color: #b6b6b6; flex: none; }
.gitem { width: 102px; padding-top: 9px; display: flex; flex-direction: column; align-items: center; }
.gitem span { margin-top: 8px; }
.bigt { font: 700 39px/39px "Liberation Serif", serif; color: #bebebe; }
.gscroll { margin-left: auto; width: 20px; border-left: 2px solid #bdbdbd; display: flex; flex-direction: column; }
.gscroll span { margin: 0; flex: 1; display: flex; flex-direction: column; align-items: center; justify-content: center; border-bottom: 2px solid #bdbdbd; }
.gscroll span:last-child { border: 0; }
.gscroll .exp::before { content: ""; width: 8px; height: 2px; background: #888; margin-bottom: 2px; }
.textopts { margin-left: 3px; width: 160px; }
.textopts .line:first-child { height: 28px; gap: 4px; }
.textopts .swap { margin-right: -4px; }
.spin { display: flex; justify-content: space-between; height: 28px !important; padding-left: 6px; }
.spin span { display: flex; flex-direction: column; gap: 6px; padding: 3px 5px 0 0; }
.textopts .ex { margin-left: 8px; }
.color { width: 46px; height: 29px; border: 1px solid #d0d0d0; display: flex; align-items: center; gap: 6px; padding-left: 4px; background: #fff; }
.color b { width: 22px; height: 20px; background: #7b7b7b; border: 1px solid #999; }
.color .tri { border-top-color: #b0b0b0; }
.brush { margin-left: 4px; }
.movie { width: 70px; color: #aaa; }
.minis { display: flex; flex-direction: column; gap: 7px; padding-top: 5px; margin-left: -1px; }
.g7 .line:first-child { height: 28px; color: #444; }
.az { font: 700 12px "Open Sans", sans-serif; letter-spacing: 0; }
.gr { fill: #63985f; } .or { fill: #e09a50; }

.work { background: #f1f1f1; height: 865px; flex: none; padding: 9px 0 4px 4px; display: grid; grid-template-columns: 373px 1127px 434px; grid-template-rows: 567px 277px; gap: 8px; margin-top: 0; }
.panel { background: #f8f9f9; border: solid #dcdcdc; border-width: 0 2px 2px 1px; position: relative; }
.panel::before { content: ""; display: block; height: 5px; background: #c9c9c9; margin: 0 -2px 0 -1px; }
.panel h2 { font-size: 19.200px; line-height: 31px; color: #666; padding-left: 6px; letter-spacing: 0; }
.search { display: flex; align-items: center; height: 30px; margin-top: 14px; padding-left: 4px; }
.search span { margin-left: 10px; width: 330px; height: 30px; border: 2px solid #bbb; background: #fff; font-style: italic; line-height: 26px; padding-left: 6px; color: #555; }
.views { padding: 6px 0 0 20px; height: 71px; }
.contents h3 { font-size: 17.700px; font-weight: 600; padding-left: 20px; height: 39px; line-height: 40px; color: #444; margin-top: -1px; }
.tree { height: 374px; display: flex; overflow: hidden; color: #555; }
.tree ul { margin-top: -16.400px; width: 357px; flex: none; }
.tree li { height: 30.700px; display: flex; align-items: center; white-space: nowrap; letter-spacing: .06px; }
.tree li.sw { padding-left: 36.500px; }
.sw b { width: 26px; height: 21px; border: 1px solid #b0b0a8; margin-top: -4px; }
.yellow { background: #f8f9d6; } .grey { background: #e0e0e0; }
.sw .grey { border-color: #999; }
.exp { flex: none; }
li .exp { width: 7px; height: 12px; border: 6px solid transparent; border-left: 7px solid #999; border-right: 0; margin: -3px 5px 0 20px; position: relative; }
li .exp::after { content: ""; position: absolute; left: -6px; top: -3.500px; border: 3.500px solid transparent; border-left: 4px solid #fff; border-right: 0; }
li .exp.open { border: 0; width: 9px; height: 9px; background: linear-gradient(135deg, transparent 50%, #555 50%); margin: -3px 6px 0 17px; }
li .exp.open::after, li .exp.none::after { display: none; }
li .exp.none { border-color: transparent; }
.selected { border: 1px solid #3a86c4; background: #e1edf8; width: 324px; height: 31px; margin-left: -2px; display: flex; align-items: center; }
.head { color: #333; }
.tbl svg { margin-right: 8px; }
.scroll { width: 12px; margin-left: 0; display: flex; flex-direction: column; align-items: center; padding: 2px 0; }
.scroll .tri { border-left-width: 5px; border-right-width: 5px; border-top-width: 8px; border-top-color: #888; }
.scroll .tri.up { border-bottom-width: 8px; border-top: 0; }
.track { flex: 1; width: 11px; background: #dedede; margin: 3px 0 4px; padding-top: 120px; }
.thumb { height: 224px; background: #747474; }

.mapview { display: flex; flex-direction: column; }
.maptabs { height: 27px; border-bottom: 3px solid #2b78c8; display: flex; justify-content: space-between; align-items: center; flex: none; }
.maptab { width: 158px; background: #2b78c8; color: #fff; height: 24px; line-height: 28px; display: flex; justify-content: flex-end; align-items: center; gap: 11px; padding-right: 9px; }
.maptabs > .tri { border-width: 5px 5px 0; margin: 6px 4px 0 0; }
.map { height: 506px; background: #cfd3d4; position: relative; border-right: 1px solid #dcdcdc; }
.prov { stroke: #333; stroke-linejoin: round; }
.prov path { stroke-width: 3.200px; }
.land { fill: #e1e1e1; } .lake { fill: #f1f1f1; } .edge { fill: none; } .prov .cays { stroke-width: 4px; }
.stamp { position: absolute; right: 978px; top: 69px; line-height: 20px; color: #444; text-shadow: 0 0 3px #fff, 0 0 3px #fff, 0 0 4px #fff; letter-spacing: -.5px; }
.status { height: 34px; background: #fafafa; border: solid #dedede; border-width: 1px 1px 2px; display: flex; align-items: center; padding-left: 6px; }
.combo.scale { width: 128px; height: 29px; color: #444; padding-left: 6px; letter-spacing: -.1px; }
.bar { width: 1px; height: 19px; background: #b5b5b5; margin: 0 8px 0 6px; flex: none; }
.status svg + svg { margin-left: 9px; }
.status svg + .bar { margin: 0 0 0 12px; }
.coords { width: 585px; flex: none; padding: 3px 0 0 197px; color: #444; letter-spacing: -.15px; }
.sel { color: #b0b0b0; width: 181px; flex: none; margin-left: 6px; padding-top: 1px; white-space: nowrap; letter-spacing: .05px; }
.status .b2 { margin: 0 7px 0 11px !important; }

.right { display: flex; flex-direction: column; }
.props { height: 541px; border-right: 0; border-bottom-width: 1px; border-left-color: #c9c9c9; }
.phead { display: flex; justify-content: space-between; align-items: flex-start; padding-top: 0; }
.phead svg { margin-top: 2px; }
.button { width: 229px; height: 31px; border: 1px solid #555; background: #fff; text-align: center; line-height: 29px; color: #444; white-space: nowrap; letter-spacing: .06px; }
.props .button { margin: 242px 0 0 104px; }
.ptabs { display: flex; height: 26px; line-height: 26px; color: #444; padding-left: 8px; white-space: nowrap; }
.p1 { width: 70px; } .p3 { width: 98px; padding-left: 8px; } .p4 { width: 80px; }
.p2 { width: 99px; background: #f8f9f9; border: 2px solid #dcdcdc; border-top: 0; text-align: center; color: #2b78c8; margin-top: -1px; }
.timelinepanel { grid-column: 1 / 4; border-right: 0; margin-right: 0; overflow: hidden; }
.timelinepanel .button { margin: 110px 0 0 863px; }
.ghostbar { position: absolute; left: 443px; top: 235px; width: 925px; height: 60px; border-radius: 14px; background: #f3f4f4; }
.taskbar { height: 4px; background: linear-gradient(90deg, #cfe3ef 320px, #eef5fa 320px 381px, #cfe3ef 381px, #d5dfea 70%); }

.menu { position: absolute; left: 61px; top: 175px; width: 407px; height: 204px; background: #fff; border: 1px solid #b3b5bd; box-shadow: 2px 2px 4px #0006; padding: 2px 5px; }
.mgrid { display: grid; grid-template-columns: 133px 133px 133px; grid-auto-rows: 92px; height: 184px; margin-left: -5px; }
.mitem { display: flex; flex-direction: column; align-items: center; padding-top: 6px; color: #ababab; line-height: 18px; text-align: center; white-space: nowrap; }
.mitem svg { height: 41px; }
.mitem span { margin-top: 2px; }
.hot { background: #d5e3f0; color: #555; margin-left: 1px; margin-right: -1px; }
.mfoot { border-top: 1px solid #d6e2ea; height: 15px; display: flex; justify-content: flex-end; align-items: flex-end; }
.tooltip { position: absolute; left: 385px; top: 229px; width: 260px; height: 132px; padding: 7px 0 0 14px; background: #ffffff1c; border: 1px solid #0000000a; box-shadow: 0 0 4px #00000008; color: #00000020; line-height: 20.500px; font-size: 14.500px; white-space: nowrap; }
.tooltip b { display: block; color: #00000028; }
.tooltip p { margin-top: 11px; }
.mark { position: absolute; left: 270px; top: 134px; }
```
